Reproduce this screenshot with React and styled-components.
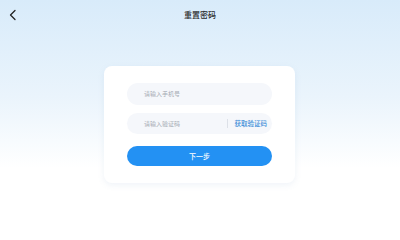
import React from "react";
import styled, { createGlobalStyle } from "styled-components";

const Global = createGlobalStyle`
  html, body { margin: 0; padding: 0; }
  body {
    width: 400px;
    height: 240px;
    overflow: hidden;
    font-family: "Noto Sans CJK SC", "Noto Sans", sans-serif;
  }
`;

const Page = styled.div`
  width: 400px;
  height: 240px;
  background: linear-gradient(180deg, #d8ebfa 0%, #eaf4fc 40%, #ffffff 70%, #ffffff 100%);
  display: flex;
  flex-direction: column;
`;

const Header = styled.div`
  height: 29px;
  display: grid;
  grid-template-columns: 40px 1fr 40px;
  align-items: center;
`;

const Back = styled.button`
  border: 0;
  background: none;
  padding: 0 0 0 8px;
  display: flex;
  align-items: center;
  cursor: pointer;
`;

const Title = styled.div`
  text-align: center;
  font-size: 8px;
  color: #2a2a2a;
  font-weight: 500;
`;

const Body = styled.div`
  flex: 1;
  display: flex;
  justify-content: center;
  padding-top: 37px;
  padding-right: 1px;
`;

const Card = styled.div`
  width: 191px;
  height: 117px;
  box-sizing: border-box;
  background: #fff;
  border-radius: 8px;
  box-shadow: 0 2px 6px rgba(120, 160, 200, 0.12);
  padding: 17px 23px;
  display: flex;
  flex-direction: column;
  gap: 8px;
`;

const Field = styled.div`
  height: 22px;
  border-radius: 11px;
  background: #f5f7fb;
  display: flex;
  align-items: center;
  padding: 0 5px 0 17px;
`;

const Placeholder = styled.span`
  flex: 1;
  font-size: 6px;
  color: #a5abb4;
`;

const Divider = styled.span`
  width: 1px;
  height: 9px;
  background: #dde1e8;
  margin-right: 7px;
`;

const CodeLink = styled.span`
  font-size: 6.5px;
  color: #3b8ed8;
  font-weight: 500;
`;

const Button = styled.button`
  margin-top: 4px;
  height: 20px;
  border: 0;
  border-radius: 10px;
  background: #2391f3;
  color: #fff;
  font-family: inherit;
  font-size: 7px;
  font-weight: 500;
  padding: 0;
`;

export default function App() {
  return (
    <>
      <Global />
      <Page>
        <Header>
          <Back aria-label="back">
            <svg width="10" height="12" viewBox="0 0 10 12" fill="none">
              <path d="M7 1.5 L2.5 6 L7 10.5" stroke="#222" strokeWidth="1.3" strokeLinecap="round" strokeLinejoin="round" />
            </svg>
          </Back>
          <Title>重置密码</Title>
          <span />
        </Header>
        <Body>
          <Card>
            <Field>
              <Placeholder>请输入手机号</Placeholder>
            </Field>
            <Field>
              <Placeholder>请输入验证码</Placeholder>
              <Divider />
              <CodeLink>获取验证码</CodeLink>
            </Field>
            <Button>下一步</Button>
          </Card>
        </Body>
      </Page>
    </>
  );
}
